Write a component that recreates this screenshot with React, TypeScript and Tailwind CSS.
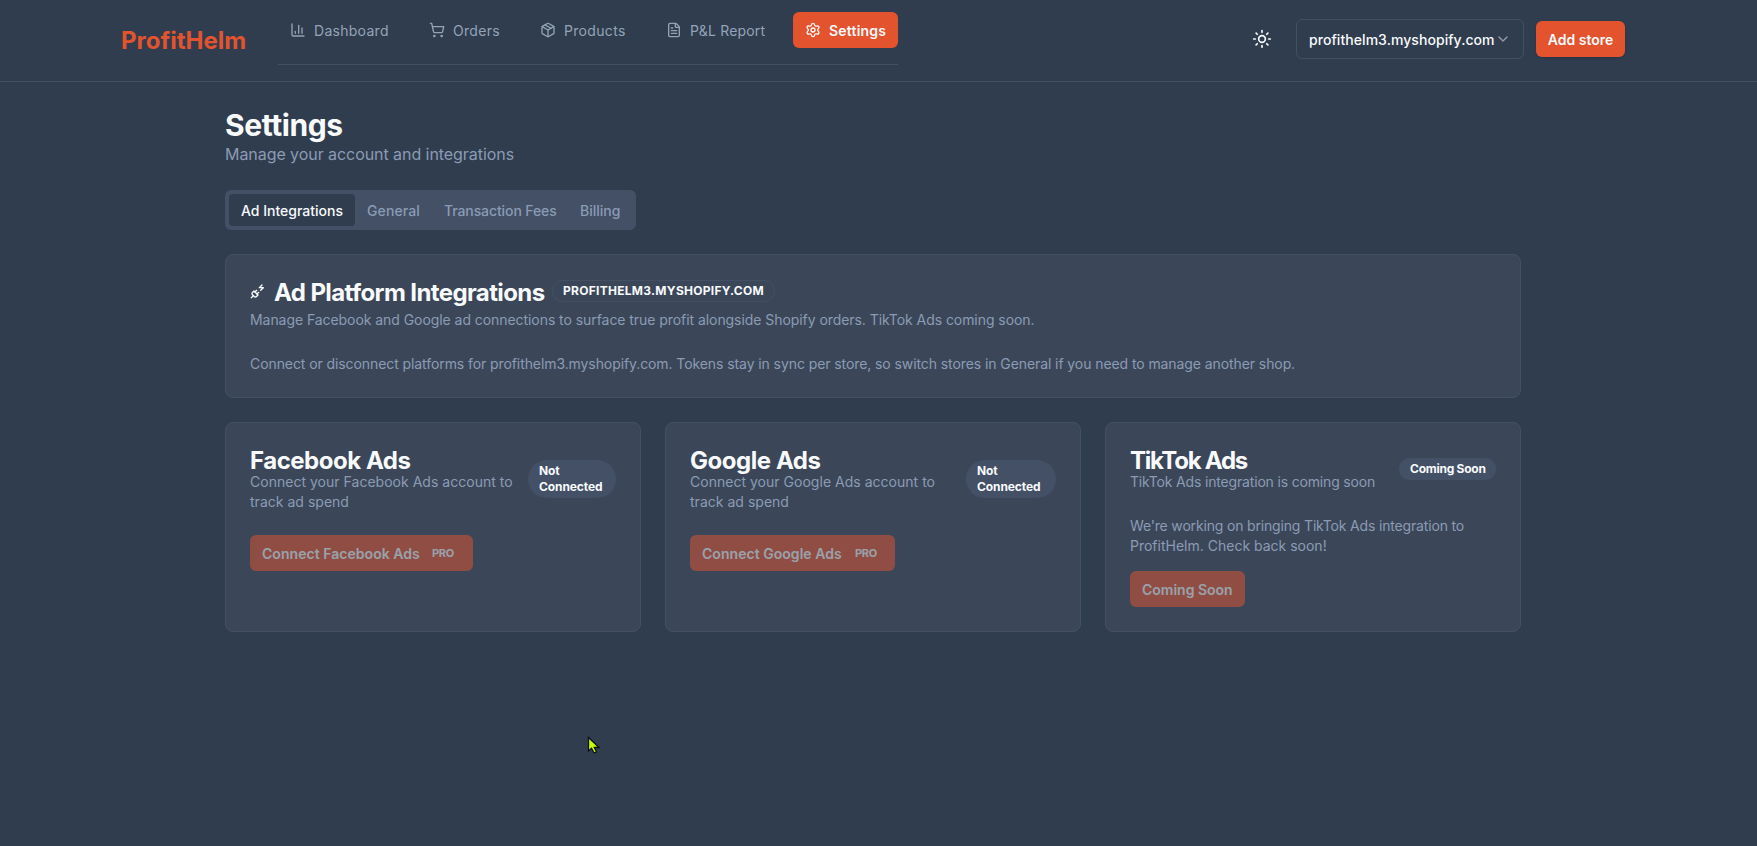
import type { ReactNode } from 'react';
import {
  ChartColumn,
  ChevronDown,
  FileText,
  Package,
  PlugZap,
  Settings,
  ShoppingCart,
  Sun,
} from 'lucide-react';
import clsx from 'clsx';

const navItems = [
  { label: 'Dashboard', icon: ChartColumn, width: 'w-[123px]', tracking: 'tracking-[0.28px]' },
  { label: 'Orders', icon: ShoppingCart, width: 'w-[95px]', tracking: 'tracking-[0.3px]' },
  { label: 'Products', icon: Package, width: 'w-[110px]', tracking: 'tracking-[0.32px]' },
  { label: 'P&L Report', icon: FileText, width: 'w-[123px]', tracking: 'tracking-[0.2px]' },
  { label: 'Settings', icon: Settings, width: 'w-[105px]', tracking: 'tracking-[0.2px]', active: true },
];

const tabs = [
  { label: 'Ad Integrations', width: 'w-[126px]', tracking: 'tracking-normal', active: true },
  { label: 'General', width: 'w-[77px]', tracking: 'tracking-[0.1px]' },
  { label: 'Transaction Fees', width: 'w-[136px]', tracking: 'tracking-[-0.1px]' },
  { label: 'Billing', width: 'w-[64px]', tracking: 'tracking-normal' },
];

function Header() {
  return (
    <header className="h-[82px] border-b border-[#435064]">
      <div className="ml-[121px] flex h-full w-[1504px] items-start">
        <div className="w-[157px] pt-[23px] text-2xl leading-9 font-bold text-[#e2532e]">ProfitHelm</div>

        <nav className="flex h-[65px] gap-4 border-b border-[#435064] pt-3">
          {navItems.map(({ label, icon: Icon, width, tracking, active }) => (
            <a
              key={label}
              className={clsx(
                'flex h-9 items-center gap-2 rounded-md px-3 text-sm whitespace-nowrap',
                width,
                active ? 'bg-[#e2532e] font-semibold text-[#f8fafc]' : 'text-[#94a3b8]'
              )}
            >
              <Icon size={16} className="shrink-0" />
              <span className={clsx('pt-0.5', tracking)}>{label}</span>
            </a>
          ))}
        </nav>

        <div className="ml-auto flex items-center gap-3 pt-[19px]">
          <button className="flex size-10 items-center justify-center text-[#f8fafc]">
            <Sun size={20} />
          </button>
          <button className="ml-0.5 flex h-10 w-[228px] items-center rounded-md border border-[#435064] pl-3 text-sm font-medium text-[#f8fafc]">
            <span className="w-[186px] pt-0.5 text-left tracking-[0.06px] whitespace-nowrap">
              profithelm3.myshopify.com
            </span>
            <ChevronDown size={16} className="opacity-50" />
          </button>
          <button className="flex h-9 w-[89px] items-center justify-center rounded-md bg-[#e2532e] pt-0.5 text-sm font-semibold whitespace-nowrap text-[#f8fafc] shadow-sm">
            Add store
          </button>
        </div>
      </div>
    </header>
  );
}

function Card({ className, children }: { className?: string; children: ReactNode }) {
  return (
    <section className={clsx('rounded-lg border border-[#435064] bg-[#3b4759] px-6', className)}>{children}</section>
  );
}

function CardTitle({ tracking, children }: { tracking: string; children: ReactNode }) {
  return <h3 className={clsx('-mb-px text-2xl leading-6 font-bold whitespace-nowrap', tracking)}>{children}</h3>;
}

function CardText({ className, children }: { className?: string; children: ReactNode }) {
  return <p className={clsx('text-sm whitespace-nowrap text-[#8b9bb4]', className)}>{children}</p>;
}

function StatusBadge({ className, children }: { className: string; children: ReactNode }) {
  return (
    <div className={clsx('shrink-0 rounded-full bg-[#435066] px-[11px] py-[3px] text-xs leading-4 font-bold', className)}>
      {children}
    </div>
  );
}

function ConnectButton({ className, children }: { className: string; children: ReactNode }) {
  return (
    <button
      disabled
      className={clsx(
        'flex h-9 items-center rounded-md bg-[#e2532e] px-3 pt-0.5 text-sm font-semibold whitespace-nowrap opacity-50',
        className
      )}
    >
      {children}
    </button>
  );
}

export default function App() {
  return (
    <div className="min-h-[846px] bg-[#303d4e] font-['Inter','Liberation_Sans',sans-serif] text-[#f8fafc]">
      <Header />

      <main className="ml-[225px] w-[1296px] pt-[26px]">
        <h1 className="text-3xl leading-[34px] font-bold tracking-[-0.42px]">Settings</h1>
        <p className="text-base leading-6 tracking-[-0.06px] text-[#8b9bb4]">Manage your account and integrations</p>

        <div className="mt-6 flex h-10 w-[411px] rounded-md bg-[#435066] p-1">
          {tabs.map(({ label, width, tracking, active }) => (
            <button
              key={label}
              className={clsx(
                'h-8 rounded-sm px-3 pt-0.5 text-left text-sm font-medium whitespace-nowrap',
                width,
                tracking,
                active ? 'bg-[#303d4e] text-[#f8fafc]' : 'text-[#8b9bb4]'
              )}
            >
              {label}
            </button>
          ))}
        </div>

        <Card className="mt-6 h-36 pt-6">
          <div className="flex h-[31px] items-start gap-2">
            <PlugZap size={16} className="mt-1" />
            <div className="w-[270px] pt-0.5">
              <CardTitle tracking="tracking-[-0.6px]">Ad Platform Integrations</CardTitle>
            </div>
            <span className="mt-px flex h-[22px] w-[223px] items-center justify-center rounded-full border border-[#435064] text-xs font-bold tracking-[0.28px] whitespace-nowrap uppercase">
              profithelm3.myshopify.com
            </span>
          </div>
          <CardText className="tracking-[-0.06px]">
            Manage Facebook and Google ad connections to surface true profit alongside Shopify orders. TikTok Ads coming
            soon.
          </CardText>
          <CardText className="mt-6 tracking-[-0.086px]">
            Connect or disconnect platforms for profithelm3.myshopify.com. Tokens stay in sync per store, so switch
            stores in General if you need to manage another shop.
          </CardText>
        </Card>

        <div className="mt-6 grid h-[210px] grid-cols-3 gap-6">
          <Card className="pt-6">
            <div className="flex h-16 items-center justify-between">
              <div className="pt-[3px]">
                <CardTitle tracking="tracking-[-0.48px]">Facebook Ads</CardTitle>
                <CardText className="tracking-[0.02px]">
                  Connect your Facebook Ads account to
                  <br />
                  track ad spend
                </CardText>
              </div>
              <StatusBadge className="h-[38px] w-[88px] tracking-[-0.1px]">Not Connected</StatusBadge>
            </div>
            <ConnectButton className="mt-6 w-[223px]">
              <span className="w-[170px] text-left tracking-[0.04px]">Connect Facebook Ads</span>
              <span className="text-[11px] font-bold tracking-[-0.3px]">PRO</span>
            </ConnectButton>
          </Card>

          <Card className="pt-6">
            <div className="flex h-16 items-center justify-between">
              <div className="pt-[3px]">
                <CardTitle tracking="tracking-[-0.45px]">Google Ads</CardTitle>
                <CardText className="tracking-[0.02px]">
                  Connect your Google Ads account to
                  <br />
                  track ad spend
                </CardText>
              </div>
              <StatusBadge className="h-[38px] w-[90px] tracking-[-0.1px]">Not Connected</StatusBadge>
            </div>
            <ConnectButton className="mt-6 w-[205px]">
              <span className="w-[153px] text-left tracking-[0.04px]">Connect Google Ads</span>
              <span className="text-[11px] font-bold tracking-[-0.3px]">PRO</span>
            </ConnectButton>
          </Card>

          <Card className="pt-6">
            <div className="flex h-11 items-center justify-between">
              <div className="pt-[3px]">
                <CardTitle tracking="tracking-[-1.25px]">TikTok Ads</CardTitle>
                <CardText className="tracking-[-0.17px]">TikTok Ads integration is coming soon</CardText>
              </div>
              <StatusBadge className="h-[22px] w-[97px] tracking-[-0.25px] whitespace-nowrap">Coming Soon</StatusBadge>
            </div>
            <CardText className="mt-[25px]">
              <span className="tracking-[-0.17px]">We're working on bringing TikTok Ads integration to</span>
              <br />
              ProfitHelm. Check back soon!
            </CardText>
            <ConnectButton className="mt-[15px] w-[115px]">Coming Soon</ConnectButton>
          </Card>
        </div>
      </main>

      {/* mouse pointer */}
      <svg className="absolute top-[736px] left-[587px]" width="13" height="18" viewBox="0 0 13 18">
        <path d="M1.500 1.500v13.500l3-2.700 2.600 4.700 2.400-1-2.200-4.500H12z" fill="#c0ff00" stroke="#101018" strokeWidth="1.300" />
      </svg>
    </div>
  );
}
